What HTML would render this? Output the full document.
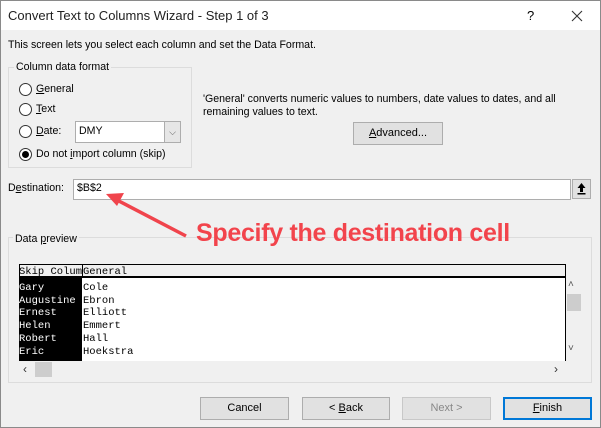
<!DOCTYPE html>
<html><head><meta charset="utf-8"><style>
*{margin:0;padding:0;box-sizing:border-box}
body{width:601px;height:428px;overflow:hidden;background:#f0f0f0;font-family:"Liberation Sans",sans-serif;font-size:10.6px;color:#000;position:relative}
.a{position:absolute;white-space:nowrap}
.win{position:absolute;left:0;top:0;width:601px;height:428px;border:1px solid #8a8a8a}
.title{position:absolute;left:1px;top:1px;width:599px;height:29px;background:#fff}
.grp{position:absolute;border:1px solid #dcdcdc}
.lbl{position:absolute;background:#f0f0f0;padding:0 2px}
.rad{position:absolute;width:13px;height:13px;border:1px solid #333;border-radius:50%;background:#fff}
.btn{position:absolute;border:1px solid #adadad;background:#e1e1e1;text-align:center;line-height:20px;font-size:11px}
.mono{font-family:"Liberation Mono",monospace;font-size:10.5px}
u{text-decoration:underline}
</style></head><body>
<div class="win"></div>
<div class="title"></div>
<div class="a" style="left:8px;top:8px;font-size:13px;color:#222">Convert Text to Columns Wizard - Step 1 of 3</div>
<div class="a" style="left:527px;top:8px;font-size:13px">?</div>
<svg class="a" style="left:571px;top:10px" width="12" height="12"><path d="M1 1L11 11M11 1L1 11" stroke="#333" stroke-width="1.1"/></svg>
<div class="a" style="left:8px;top:39px">This screen lets you select each column and set the Data Format.</div>

<div class="grp" style="left:8px;top:67px;width:184px;height:101px"></div>
<div class="lbl" style="left:14px;top:61px">Column data format</div>
<div class="rad" style="left:19px;top:83px"></div><div class="a" style="left:36px;top:83px"><u>G</u>eneral</div>
<div class="rad" style="left:19px;top:103px"></div><div class="a" style="left:36px;top:103px"><u>T</u>ext</div>
<div class="rad" style="left:19px;top:125px"></div><div class="a" style="left:36px;top:125px"><u>D</u>ate:</div>
<div class="rad" style="left:19px;top:148px"></div><div class="a" style="left:22px;top:151px;width:7px;height:7px;border-radius:50%;background:#000"></div>
<div class="a" style="left:36px;top:148px">Do not <u>i</u>mport column (skip)</div>
<div class="a" style="left:75px;top:121px;width:106px;height:22px;border:1px solid #adadad;background:#fff"></div>
<div class="a" style="left:79px;top:125px">DMY</div>
<div class="a" style="left:164px;top:122px;width:16px;height:20px;background:#e6e6e6;border-left:1px solid #adadad;text-align:center;font-size:9px;line-height:20px;color:#555">⌵</div>

<div class="a" style="left:203px;top:93px">'General' converts numeric values to numbers, date values to dates, and all</div>
<div class="a" style="left:203px;top:106px">remaining values to text.</div>
<div class="btn" style="left:353px;top:122px;width:90px;height:23px"><u>A</u>dvanced...</div>

<div class="a" style="left:8px;top:182px">D<u>e</u>stination:</div>
<div class="a" style="left:73px;top:179px;width:498px;height:21px;border:1px solid #adadad;background:#fff"></div>
<div class="a" style="left:77px;top:182px">$B$2</div>
<div class="a" style="left:572px;top:179px;width:19px;height:20px;border:1px solid #adadad;background:#e1e1e1"></div>
<svg class="a" style="left:576px;top:182px" width="11" height="13"><path d="M5.5 1L1.5 6H4V10H7V6H9.5Z" fill="#000"/><rect x="1.5" y="11" width="8" height="1.5" fill="#000"/></svg>

<div class="grp" style="left:8px;top:237px;width:584px;height:146px"></div>
<div class="lbl" style="left:13px;top:233px">Data <u>p</u>review</div>

<div class="a" style="left:19px;top:264px;width:547px;height:14px;border:1px solid #000;border-bottom:2px solid #000;background:#f0f0f0"></div>
<div class="a" style="left:82px;top:264px;width:1px;height:14px;background:#000"></div>
<div class="a mono" style="left:19px;top:266px">Skip Colum</div>
<div class="a mono" style="left:83px;top:266px">General</div>
<div class="a" style="left:19px;top:278px;width:547px;height:83px;background:#fff;border-right:1px solid #000"></div>
<div class="a" style="left:19px;top:278px;width:63px;height:83px;background:#000"></div>
<div class="a mono" style="left:19px;top:282px;line-height:12.7px;color:#fff">Gary<br>Augustine<br>Ernest<br>Helen<br>Robert<br>Eric</div>
<div class="a mono" style="left:83px;top:282px;line-height:12.7px">Cole<br>Ebron<br>Elliott<br>Emmert<br>Hall<br>Hoekstra</div>
<div class="a" style="left:568px;top:279px;font-size:10px;color:#555">˄</div>
<div class="a" style="left:567px;top:294px;width:14px;height:17px;background:#cdcdcd"></div>
<div class="a" style="left:568px;top:343px;font-size:10px;color:#555">˅</div>
<div class="a" style="left:23px;top:362px;font-size:12px;color:#333">‹</div>
<div class="a" style="left:35px;top:362px;width:17px;height:15px;background:#cdcdcd"></div>
<div class="a" style="left:554px;top:362px;font-size:12px;color:#333">›</div>

<svg class="a" style="left:0;top:0" width="601" height="428"><line x1="186" y1="236" x2="115" y2="199" stroke="#f0444c" stroke-width="3.5"/><polygon points="106,194 124,193 117,206" fill="#f0444c"/></svg>
<div class="a" style="left:196px;top:219px;font-size:25px;font-weight:bold;color:#f2444c;letter-spacing:-0.3px">Specify the destination cell</div>

<div class="btn" style="left:200px;top:397px;width:89px;height:23px">Cancel</div>
<div class="btn" style="left:302px;top:397px;width:88px;height:23px">&lt; <u>B</u>ack</div>
<div class="btn" style="left:402px;top:397px;width:89px;height:23px;color:#888;border-color:#c8c8c8">Next &gt;</div>
<div class="btn" style="left:503px;top:397px;width:89px;height:23px;border:2px solid #0078d7;line-height:19px"><u>F</u>inish</div>
</body></html>
